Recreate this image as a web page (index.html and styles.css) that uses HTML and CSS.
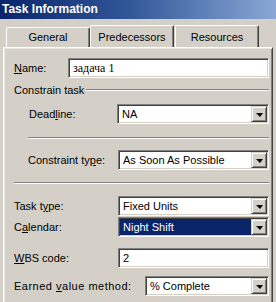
FILE: index.html
```html
<!doctype html>
<html lang="en">
<head>
<meta charset="utf-8">
<title>Task Information</title>
<link rel="stylesheet" href="styles.css">
</head>
<body>
<div class="titlebar">Task Information</div>
<div class="tabs">
    <div class="tab first">General</div>
    <div class="tab">Predecessors</div>
    <div class="tab">Resources</div>
</div>
<div class="panel">
    <div class="row r-name">
        <label class="lbl w-name"><u>N</u>ame:</label>
        <div class="edit serif w-name-in">задача 1</div>
    </div>
    <div class="group">
        <span>Constrain task</span>
        <div class="line"></div>
    </div>
    <div class="row r-deadline">
        <label class="lbl w-deadline">Dead<u>l</u>ine:</label>
        <div class="combo w-full1"><span class="val">NA</span><span class="drop"></span></div>
    </div>
    <div class="sep sep1"></div>
    <div class="row r-ctype">
        <label class="lbl w-ctype">Constraint ty<u>p</u>e:</label>
        <div class="combo w-full2"><span class="val">As Soon As Possible</span><span class="drop"></span></div>
    </div>
    <div class="sep sep2"></div>
    <div class="row r-ttype">
        <label class="lbl w-main">Task t<u>y</u>pe:</label>
        <div class="combo w-full2"><span class="val">Fixed Units</span><span class="drop"></span></div>
    </div>
    <div class="row r-cal">
        <label class="lbl w-main">C<u>a</u>lendar:</label>
        <div class="combo w-full2 focus"><span class="val">Night Shift</span><span class="drop"></span></div>
    </div>
    <div class="row r-wbs">
        <label class="lbl w-main"><u>W</u>BS code:</label>
        <div class="edit w-full2">2</div>
    </div>
    <div class="row r-earned">
        <label class="lbl w-earned">Earned <u>v</u>alue method:</label>
        <div class="combo w-earned-in"><span class="val">% Complete</span><span class="drop"></span></div>
    </div>
</div>
</body>
</html>
```
FILE: styles.css
```css
BODY {
    margin: 0;
    background: #d4d0c8;
    font: 11px "Liberation Sans", Arial, sans-serif;
    color: #000;
    overflow: hidden;
}
U {
    text-decoration: underline;
    text-underline-offset: 1px;
}
.titlebar {
    height: 19px;
    line-height: 19px;
    padding-left: 2px;
    background: linear-gradient(to right, #0a246a, #2f5596 45%, #8aa7d6);
    color: #fff;
    font-weight: bold;
    font-size: 12px;
}
.tabs {
    display: flex;
    align-items: flex-end;
    height: 28px;
    padding-left: 6px;
}
.tab {
    width: 82px;
    height: 21px;
    line-height: 22px;
    text-align: center;
    border-top: 1px solid #fff;
    border-left: 1px solid #fff;
    border-right: 1px solid #404040;
    box-shadow: inset -1px 0 #808080;
    border-radius: 2px 2px 0 0;
}
.tab.first {
    height: 19px;
    line-height: 18px;
}
.tab:last-child {
    margin-left: 1px;
}
.panel {
    margin-left: 3px;
    width: 265px;
    height: 260px;
    border-top: 1px solid #fff;
    border-left: 1px solid #fff;
    border-right: 1px solid #404040;
    box-shadow: inset 1px 1px #e8e6e0, inset -1px 0 #808080;
    padding: 0 3px 0 0;
}
.row {
    display: flex;
    align-items: center;
    height: 20px;
}
.lbl {
    display: block;
    box-sizing: border-box;
    flex: none;
}
.w-name { width: 64px; padding-left: 10px; }
.w-deadline { width: 113px; padding-left: 25px; }
.w-ctype { width: 114px; padding-left: 24px; }
.w-main { width: 114px; padding-left: 10px; }
.w-earned { width: 141px; padding-left: 10px; letter-spacing: 0.5px; }
.w-name-in { width: 201px; }
.w-full1 { width: 152px; }
.w-full2 { width: 151px; }
.w-earned-in { width: 124px; }

.edit, .combo {
    box-sizing: border-box;
    height: 20px;
    background: #fff;
    border-top: 1px solid #808080;
    border-left: 1px solid #808080;
    border-right: 1px solid #fff;
    border-bottom: 1px solid #fff;
    box-shadow: inset 1px 1px #404040, inset -1px -1px #d4d0c8;
    display: flex;
    align-items: center;
}
.edit {
    padding-left: 4px;
}
.serif {
    font: 12px "Liberation Serif", "Times New Roman", serif;
}
.combo .val {
    flex: 1;
    align-self: stretch;
    margin: 1px 0 1px 1px;
    padding-left: 3px;
    display: flex;
    align-items: center;
}
.combo.focus .val {
    background: #0a246a;
    color: #fff;
}
.drop {
    flex: none;
    box-sizing: border-box;
    width: 16px;
    height: 16px;
    margin: 0 1px 0 0;
    background: #d4d0c8;
    border-top: 1px solid #d4d0c8;
    border-left: 1px solid #d4d0c8;
    border-right: 1px solid #404040;
    border-bottom: 1px solid #404040;
    box-shadow: inset 1px 1px #fff, inset -1px -1px #808080;
    display: flex;
    align-items: center;
    justify-content: center;
}
.drop::after {
    content: "";
    border-left: 4px solid transparent;
    border-right: 3px solid transparent;
    border-top: 4px solid #000;
    margin-top: 1px;
}
.group {
    display: flex;
    align-items: center;
    height: 12px;
    margin-top: 6px;
    padding-left: 10px;
}
.group .line, .sep {
    height: 1px;
    border-bottom: 1px solid #fff;
    background: #808080;
}
.group .line {
    flex: 1;
    margin-left: 2px;
}
.sep {
    margin-top: 13px;
}
.sep1 { margin-left: 24px; }
.sep2 { margin-left: 10px; margin-top: 12px; }

.r-name { margin-top: 10px; }
.r-deadline { margin-top: 8px; }
.r-ctype { margin-top: 11px; }
.r-ttype { margin-top: 12px; }
.r-cal { margin-top: 1px; }
.r-wbs { margin-top: 11px; }
.r-earned { margin-top: 8px; }
```
